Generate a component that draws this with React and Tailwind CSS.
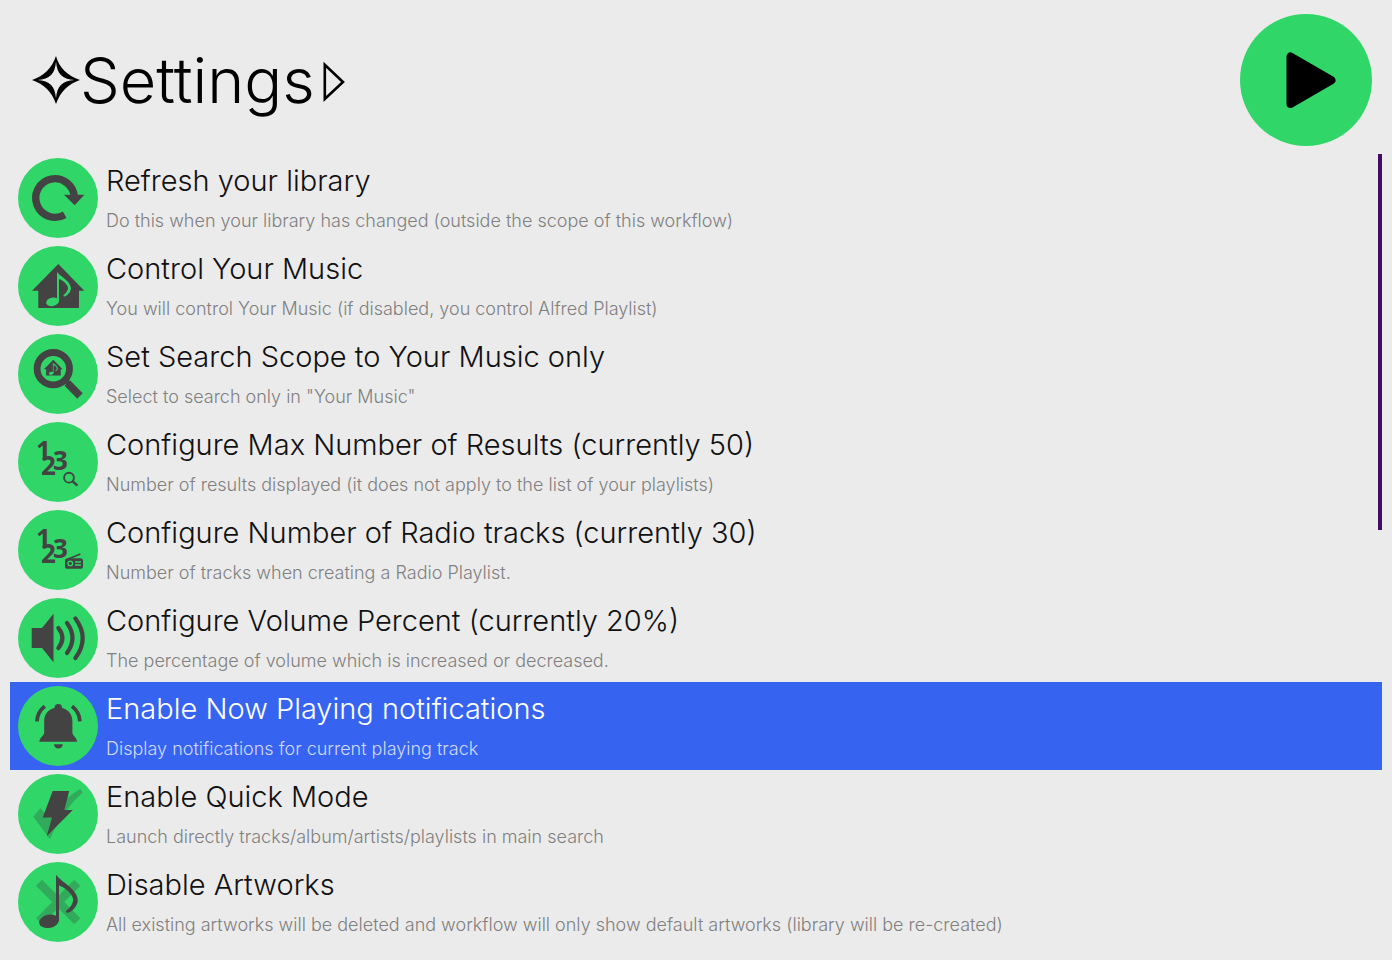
import { useState } from "react";

function Disc({ children }) {
  return (
    <svg viewBox="0 0 80 80" className="size-20 shrink-0" aria-hidden="true">
      <circle cx="40" cy="40" r="40" fill="#30d768" />
      {children}
    </svg>
  );
}

function Note() {
  return (
    <g>
      <path d="M38 12.7C43 20 59.8 27 59.8 38.5C59.8 43.5 53.5 51 49 50.8C47.5 50.5 47.8 49.5 48.5 48.6C53 45 56.5 40 54.5 35C52.5 30 46 25 41 23.5V59H38Z" />
      <ellipse cx="31" cy="59.3" rx="10" ry="6.6" transform="rotate(-12 31 59.3)" />
    </g>
  );
}

function House() {
  return (
    <g>
      <path d="M40.3 18L66.3 44.7H61V62H20.3V44.7H14Z" fill="#434343" />
      <g fill="#30d768" transform="translate(14.7 17.9) scale(.64)">
        <Note />
      </g>
    </g>
  );
}

function Digits() {
  return (
    <text fill="#434343" className="font-['Open_Sans',sans-serif] text-[26px] font-bold">
      <tspan x="18" y="38">1</tspan>
      <tspan x="23" y="53">2</tspan>
      <tspan x="35" y="48">3</tspan>
    </text>
  );
}

function RefreshIcon() {
  return (
    <Disc>
      <path d="M56.3 39A19.3 19.3 0 1 0 46.7 56.7" fill="none" stroke="#434343" strokeWidth="7.4" />
      <path d="M46 36.7H66.4L56.7 47.2Z" fill="#434343" />
    </Disc>
  );
}

function HouseIcon() {
  return (
    <Disc>
      <House />
    </Disc>
  );
}

function ScopeIcon() {
  return (
    <Disc>
      <circle cx="35.3" cy="34.7" r="16.2" fill="none" stroke="#434343" strokeWidth="6.8" />
      <path d="M46 45L52 51" stroke="#434343" strokeWidth="5" />
      <path d="M49.3 49L62 62" stroke="#434343" strokeWidth="7.6" />
      <g transform="translate(20.8 19.2) scale(.36)">
        <House />
      </g>
    </Disc>
  );
}

function ResultsIcon() {
  return (
    <Disc>
      <Digits />
      <circle cx="51" cy="55.7" r="4.9" fill="none" stroke="#434343" strokeWidth="1.9" />
      <path d="M54.4 59.1L59.4 63.6" stroke="#434343" strokeWidth="2.6" />
    </Disc>
  );
}

function RadioIcon() {
  return (
    <Disc>
      <Digits />
      <path d="M50 49L62.4 44" stroke="#434343" strokeWidth="1.4" />
      <rect x="47" y="48.2" width="18" height="10.6" rx="2.6" fill="#434343" />
      <circle cx="52.3" cy="53.4" r="2.3" fill="none" stroke="#30d768" strokeWidth="1.3" />
      <path d="M57 52H63M57 55H63" stroke="#30d768" strokeWidth="1.3" />
    </Disc>
  );
}

function VolumeIcon() {
  return (
    <Disc>
      <path d="M13.7 30H24L35.5 15.7V64.3L24 50H13.7Z" fill="#434343" />
      <path
        d="M40.4 30Q48.4 40 40.4 50M49 25Q60 40 49 55M57.4 20.4Q72 40 57.4 60"
        fill="none"
        stroke="#434343"
        strokeWidth="4.2"
        strokeLinecap="round"
      />
    </Disc>
  );
}

function BellIcon() {
  return (
    <Disc>
      <g fill="#434343">
        <circle cx="40.3" cy="21.6" r="3.7" />
        <path d="M40.3 21.6C48.5 21.6 54.4 27 54.4 35V46.5C54.4 50 59 51.5 59 55.7H21.4C21.4 51.5 26.2 50 26.2 46.5V35C26.2 27 32 21.6 40.3 21.6Z" />
        <path d="M36 58.2H44.8C44.8 60.8 42.8 62.4 40.4 62.4C38 62.4 36 60.8 36 58.2Z" />
      </g>
      <path
        d="M18.9 35.4C19.2 29.5 22 24 26.8 20.3M61.9 35.4C61.6 29.5 58.8 24 54 20.3"
        fill="none"
        stroke="#434343"
        strokeWidth="3.8"
      />
    </Disc>
  );
}

function BoltIcon() {
  return (
    <Disc>
      <path d="M15.3 42.7L22.3 34.3L31.5 44C41 31 50 22 62.3 15L64.8 18.5C51 31 40 46 32 65.3Z" fill="#31ab5b" />
      <path d="M34.7 17H51.2L46.3 36H54.8L28.7 62.3L34 43.4H24.7Z" fill="#434343" />
    </Disc>
  );
}

function ArtworkIcon() {
  return (
    <Disc>
      <path d="M21 20.7L59.3 59.3M59.3 20.7L21 59.3" stroke="#31ab5b" strokeWidth="8.6" />
      <g fill="#434343">
        <Note />
      </g>
    </Disc>
  );
}

function Star() {
  return (
    <svg viewBox="0 0 48 48" className="size-12 shrink-0" aria-hidden="true">
      <path
        fillRule="evenodd"
        d="M24 0C27 12 36 20 48 24C36 28 28 36 24 48C20 36 12 28 0 24C12 20 20 12 24 0ZM24 5.5C23 18 18 23 5.5 24C18 25 23 30 24 42.5C25 30 30 25 42.5 24C30 23 25 18 24 5.5Z"
      />
    </svg>
  );
}

function Arrow() {
  return (
    <svg viewBox="0 0 22 42" className="h-[42px] w-[22px] shrink-0" aria-hidden="true">
      <path d="M1.8 3.8V38L20 21Z" fill="none" stroke="#000" strokeWidth="2.6" />
    </svg>
  );
}

const items = [
  { Icon: RefreshIcon, title: "Refresh your library", detail: "Do this when your library has changed (outside the scope of this workflow)" },
  { Icon: HouseIcon, title: "Control Your Music", detail: "You will control Your Music (if disabled, you control Alfred Playlist)" },
  { Icon: ScopeIcon, title: "Set Search Scope to Your Music only", detail: 'Select to search only in "Your Music"' },
  { Icon: ResultsIcon, title: "Configure Max Number of Results (currently 50)", detail: "Number of results displayed (it does not apply to the list of your playlists)" },
  { Icon: RadioIcon, title: "Configure Number of Radio tracks (currently 30)", detail: "Number of tracks when creating a Radio Playlist." },
  { Icon: VolumeIcon, title: "Configure Volume Percent (currently 20%)", detail: "The percentage of volume which is increased or decreased." },
  { Icon: BellIcon, title: "Enable Now Playing notifications", detail: "Display notifications for current playing track" },
  { Icon: BoltIcon, title: "Enable Quick Mode", detail: "Launch directly tracks/album/artists/playlists in main search" },
  { Icon: ArtworkIcon, title: "Disable Artworks", detail: "All existing artworks will be deleted and workflow will only show default artworks (library will be re-created)" },
];

function Row({ item, selected, onSelect }) {
  const { Icon, title, detail } = item;
  return (
    <li>
      <button
        type="button"
        aria-pressed={selected}
        onClick={onSelect}
        className={`flex w-full items-center gap-2 px-2 py-1 text-left ${selected ? "bg-[#3664f0]" : ""}`}
      >
        <Icon />
        <span className="flex min-w-0 flex-col">
          <span className={`text-[29px] leading-[46px] ${selected ? "text-white" : "text-[#111111]"}`}>{title}</span>
          <span className={`text-[18px] leading-[34px] ${selected ? "text-[#d0dafb]" : "text-[#808080]"}`}>{detail}</span>
        </span>
      </button>
    </li>
  );
}

export default function App() {
  const [query, setQuery] = useState("Settings");
  const [selected, setSelected] = useState(6);
  return (
    <main className="min-h-screen bg-[#ebebeb] px-[10px] pt-[14px] pb-[14px] font-[Inter,'Liberation_Sans','DejaVu_Sans',sans-serif] font-light">
      <header className="mb-2 flex items-center justify-between pr-[10px] pl-[22px]">
        <div className="flex min-w-0 items-center">
          <Star />
          <input
            type="text"
            aria-label="Search"
            value={query}
            onChange={(e) => setQuery(e.target.value)}
            className="field-sizing-content min-w-0 bg-transparent text-[63px] leading-20 text-black outline-none"
          />
          <span className="pt-1 pl-2">
            <Arrow />
          </span>
        </div>
        <button type="button" aria-label="Play" className="shrink-0 rounded-full">
          <svg viewBox="0 0 132 132" className="size-[132px]" aria-hidden="true">
            <circle cx="66" cy="66" r="66" fill="#30d768" />
            <path d="M50.5 42.5V90L91.5 66.2Z" stroke="#000" strokeWidth="8" strokeLinejoin="round" />
          </svg>
        </button>
      </header>
      <div className="relative">
        <ul>
          {items.map((item, i) => (
            <Row key={item.title} item={item} selected={i === selected} onSelect={() => setSelected(i)} />
          ))}
        </ul>
        <div className="absolute top-0 right-0 h-[376px] w-1 bg-[#440a66]" />
      </div>
    </main>
  );
}
